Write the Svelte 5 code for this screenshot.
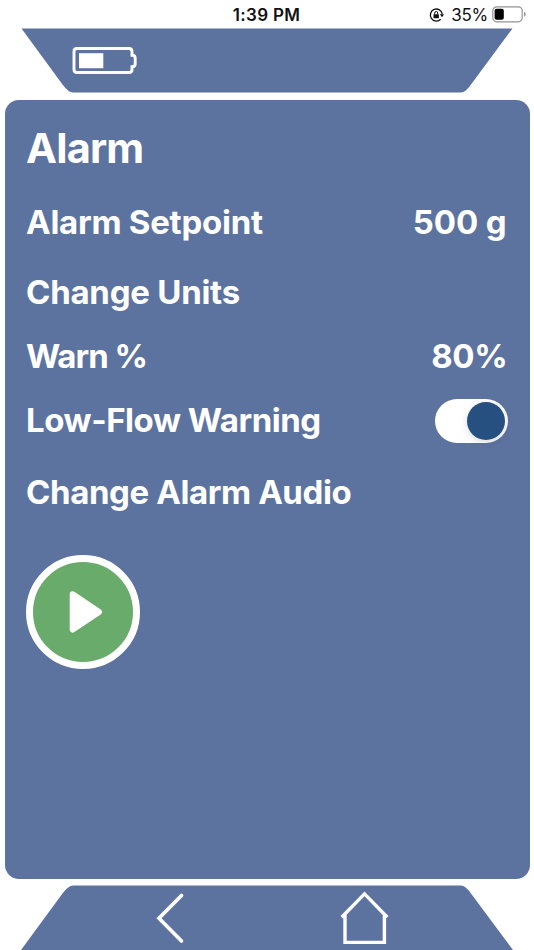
<script lang="ts">
  type Setting = { id: string; label: string; value?: string; toggle?: boolean };

  const settings: Setting[] = [
    { id: 'setpoint', label: 'Alarm Setpoint', value: '500 g' },
    { id: 'units', label: 'Change Units' },
    { id: 'warn', label: 'Warn %', value: '80%' },
    { id: 'low-flow', label: 'Low-Flow Warning', toggle: true },
    { id: 'audio', label: 'Change Alarm Audio' }
  ];

  let lowFlow = $state(true);
</script>

<div class="screen">
  <div class="status-bar">
    <span></span>
    <span class="clock">1:39 PM</span>
    <div class="status-right">
      <!-- Rotation lock -->
      <svg width="16" height="16" viewBox="0 0 16 16">
        <path d="M12.7 12.2A6 6 0 1 1 14.3 7.2" fill="none" stroke="#111" stroke-width="1.3" />
        <path d="M11.8 7.3h4.2l-2 3z" fill="#111" />
        <rect x="5.5" y="7.2" width="5.4" height="4" rx="0.6" fill="#111" />
        <path d="M6.7 7.4V6a1.5 1.5 0 0 1 3 0v1.4" fill="none" stroke="#111" stroke-width="1" />
      </svg>
      <span class="percent">35%</span>
      <svg class="phone-battery" width="35" height="17" viewBox="0 0 35 17">
        <rect x="0.8" y="0.8" width="29.4" height="15" rx="4" fill="none" stroke="#929292" stroke-width="1.2" />
        <rect x="2.6" y="2.8" width="9.2" height="11" rx="2" fill="#000" />
        <path d="M32 5.8c2.2 1 2.2 4 0 5z" fill="#929292" />
      </svg>
    </div>
  </div>

  <header class="top-bar">
    <svg class="shape" width="534" height="65" viewBox="0 0 534 65">
      <path d="M21.5 0.5H512.5L471 56.5Q465.5 64.5 461 64.5H73Q68.5 64.5 62.5 56.5Z" />
    </svg>
    <svg class="device-battery" width="66" height="30" viewBox="0 0 66 30">
      <path
        d="M5 2.5H57Q60 2.5 60 5.5V9.2Q63.2 9.2 63.2 12V18Q63.2 20.8 60 20.8V23.5Q60 26.5 57 26.5H5Q2 26.5 2 23.5V5.5Q2 2.5 5 2.5Z"
        fill="none" stroke="#fff" stroke-width="2.9"
      />
      <rect x="7" y="7.2" width="24.3" height="15" fill="#fff" />
    </svg>
  </header>

  <main class="panel">
    <h1>Alarm</h1>
    {#each settings as item (item.id)}
      <div class="row {item.id}">
        <span class="label">{item.label}</span>
        {#if item.value}
          <span class="value">{item.value}</span>
        {/if}
        {#if item.toggle}
          <button
            class="switch"
            class:on={lowFlow}
            role="switch"
            aria-checked={lowFlow}
            aria-label={item.label}
            onclick={() => (lowFlow = !lowFlow)}
          >
            <span class="knob"></span>
          </button>
        {/if}
      </div>
    {/each}

    <button class="play" aria-label="Play">
      <svg width="99" height="99" viewBox="0 0 99 99">
        <path d="M39.7 32.2L66 49.9L39.7 67.6Z" fill="#fff" stroke="#fff" stroke-width="6" stroke-linejoin="round" />
      </svg>
    </button>
  </main>

  <footer class="bottom-bar">
    <svg class="shape" width="534" height="65" viewBox="0 0 534 65">
      <path d="M21 65H513L471 8.5Q465.5 0.5 461 0.5H73Q68.5 0.5 62.5 8.5Z" />
    </svg>
    <button class="nav back" aria-label="Back">
      <svg width="30" height="54" viewBox="0 0 30 54">
        <path d="M26.5 4.5L4 27.2L26.5 50" fill="none" stroke="#fff" stroke-width="3.7" stroke-linecap="round" />
      </svg>
    </button>
    <button class="nav home" aria-label="Home">
      <svg width="50" height="56" viewBox="0 0 50 56">
        <path d="M1.7 27.3L24.5 3.9L47.3 27.3M5 25V52.4H44.4V25" fill="none" stroke="#fff" stroke-width="3.4" />
      </svg>
    </button>
  </footer>
</div>

<style>
:global(body) {
  background: #fff;
}
.screen {
  display: flex;
  flex-direction: column;
  width: 534px;
  height: 950px;
  overflow: hidden;
  font-family: Inter, Roboto, sans-serif;
}
button {
  border: 0;
  padding: 0;
  cursor: pointer;
}
svg {
  display: block;
}
.status-bar {
  display: grid;
  grid-template-columns: 1fr auto 1fr;
  align-items: center;
  height: 28px;
  padding: 1px 7px 0 6px;
  box-sizing: border-box;
  color: #111;
}
.clock {
  font-size: 17px;
  font-weight: 600;
  letter-spacing: 0.3px;
}
.status-right {
  display: flex;
  align-items: center;
  justify-content: flex-end;
}
.percent {
  margin: 0 4px 0 7px;
  font-size: 17px;
  letter-spacing: -0.3px;
}
.top-bar,
.bottom-bar {
  position: relative;
  display: flex;
  flex: none;
  height: 65px;
}
.shape {
  position: absolute;
  inset: 0;
  fill: #5d739f;
}
.device-battery {
  position: relative;
  margin: 18px 0 0 72px;
}
.panel {
  flex: none;
  width: 525px;
  height: 779px;
  margin: 7px 0 6px 4.5px;
  padding: 27px 22px 0 21.5px;
  box-sizing: border-box;
  border-radius: 14px;
  background: #5d739f;
  color: #fff;
}
h1 {
  margin: 0 0 31px;
  font-size: 41.5px;
  line-height: 42px;
  font-weight: 700;
  letter-spacing: -0.8px;
}
.row {
  display: flex;
  align-items: center;
  justify-content: space-between;
  height: 44px;
  font-size: 33px;
  line-height: 44px;
  font-weight: 700;
  letter-spacing: -0.25px;
}
.value {
  margin-right: 1px;
  letter-spacing: -0.1px;
}
.warn .value {
  margin-right: 0;
  letter-spacing: -0.3px;
}
.units {
  margin-top: 26px;
}
.warn {
  margin-top: 20px;
}
.warn .label {
  letter-spacing: -1px;
}
.low-flow {
  margin-top: 21px;
}
.low-flow .label {
  padding-bottom: 2px;
  letter-spacing: -0.45px;
}
.audio {
  margin-top: 27px;
}
.audio .label {
  letter-spacing: -0.4px;
}
.switch {
  display: flex;
  align-items: center;
  width: 73px;
  height: 44px;
  padding: 0 3px;
  border-radius: 22px;
  background: #fff;
}
.switch.on {
  justify-content: flex-end;
}
.knob {
  width: 38px;
  height: 38px;
  border-radius: 50%;
  background: #25507f;
  box-shadow: 0 2px 7px rgba(0, 0, 0, 0.15);
}
.play {
  display: flex;
  width: 114px;
  height: 114px;
  margin-top: 41px;
  border: 7.5px solid #fff;
  border-radius: 50%;
  background: #69ab6b;
}
.nav {
  position: relative;
  background: none;
}
.back {
  margin-left: 155px;
}
.home {
  margin-left: 155px;
}
</style>
